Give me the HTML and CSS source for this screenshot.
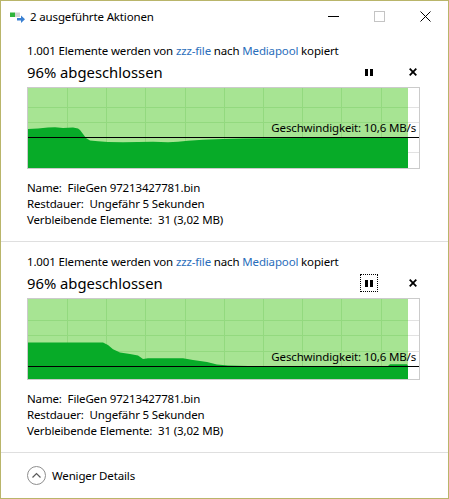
FILE: index.html
```html
<!DOCTYPE html>
<html>
<head lang="de">
    <meta charset="UTF-8">
    <title>2 ausgeführte Aktionen</title>
    <link rel="stylesheet" href="styles.css">
</head>
<body>
<div class="window">
    <div class="titlebar">
        <svg class="app-icon" width="16" height="16" viewBox="0 0 16 16">
            <rect x="1" y="4.5" width="5" height="4.5" fill="#2fb43c"/>
            <rect x="6" y="4.5" width="5" height="4.5" fill="#d3d3d3"/>
            <rect x="8" y="10" width="5" height="2.5" fill="#3a80d2"/>
            <polygon points="12,7.5 16,11.3 12,15" fill="#3a80d2"/>
        </svg>
        <span class="title">2 ausgeführte Aktionen</span>
        <span class="cap-btn">
            <svg width="11" height="11" viewBox="0 0 11 11"><line x1="0" y1="5.5" x2="11" y2="5.5" stroke="#000"/></svg>
        </span>
        <span class="cap-btn">
            <svg width="11" height="11" viewBox="0 0 11 11"><rect x="0.5" y="0.5" width="10" height="10" fill="none" stroke="#c4c4c4"/></svg>
        </span>
        <span class="cap-btn">
            <svg width="11" height="11" viewBox="0 0 11 11"><path d="M0.5 0.5 L10.5 10.5 M10.5 0.5 L0.5 10.5" stroke="#000" fill="none"/></svg>
        </span>
    </div>

    <div class="operation">
        <div class="op-line">1.001 Elemente werden von <a href="#">zzz-file</a> nach <a href="#">Mediapool</a> kopiert</div>
        <div class="op-status">
            <span class="percent">96% abgeschlossen</span>
            <span class="pause-btn">
                <svg width="8" height="7" viewBox="0 0 8 7"><rect x="0" y="0" width="3" height="7"/><rect x="5" y="0" width="3" height="7"/></svg>
            </span>
            <span class="cancel-btn">
                <svg width="8" height="8" viewBox="0 0 8 8"><path d="M0.7 0.7 L7.3 7.3 M7.3 0.7 L0.7 7.3" stroke="#000" stroke-width="1.8"/></svg>
            </span>
        </div>
        <div class="graph">
            <svg width="391" height="80" viewBox="0 0 391 80">
                <rect x="0" y="0" width="380" height="80" fill="#a7e493"/>
                <g stroke="#93d97f" stroke-width="1">
                    <line x1="39.5" y1="0" x2="39.5" y2="80"/>
                    <line x1="78.5" y1="0" x2="78.5" y2="80"/>
                    <line x1="117.5" y1="0" x2="117.5" y2="80"/>
                    <line x1="157.5" y1="0" x2="157.5" y2="80"/>
                    <line x1="196.5" y1="0" x2="196.5" y2="80"/>
                    <line x1="235.5" y1="0" x2="235.5" y2="80"/>
                    <line x1="274.5" y1="0" x2="274.5" y2="80"/>
                    <line x1="313.5" y1="0" x2="313.5" y2="80"/>
                    <line x1="353.5" y1="0" x2="353.5" y2="80"/>
                    <line x1="0" y1="19.5" x2="380" y2="19.5"/>
                    <line x1="0" y1="34.5" x2="380" y2="34.5"/>
                    <line x1="0" y1="64.5" x2="380" y2="64.5"/>
                </g>
                <g stroke="#e2e2e2" stroke-width="1">
                    <line x1="380" y1="19.5" x2="391" y2="19.5"/>
                    <line x1="380" y1="34.5" x2="391" y2="34.5"/>
                    <line x1="380" y1="64.5" x2="391" y2="64.5"/>
                </g>
                <polygon fill="#07ab28" points="0,41 10,40.5 20,39.6 27,39.2 35,40 45,39.5 50,40.5 52,42 55,46 58,50 62,52.5 70,53.2 80,54 95,54.3 110,54 125,53.8 140,54.3 150,53.8 160,52.8 175,51.8 195,51 215,50.6 240,50.2 280,50.1 330,50 380,50 380,80 0,80"/>
                <line x1="0" y1="49.5" x2="391" y2="49.5" stroke="#000" stroke-width="1"/>
            </svg>
            <span class="speed speed-a">Geschwindigkeit: 10,6 MB/s</span>
        </div>
        <div class="details">
            <div><span class="label">Name:</span> FileGen 97213427781.bin</div>
            <div><span class="label">Restdauer:</span> Ungefähr 5 Sekunden</div>
            <div><span class="label">Verbleibende Elemente:</span> 31 (3,02 MB)</div>
        </div>
    </div>

    <div class="operation">
        <div class="op-line">1.001 Elemente werden von <a href="#">zzz-file</a> nach <a href="#">Mediapool</a> kopiert</div>
        <div class="op-status">
            <span class="percent">96% abgeschlossen</span>
            <span class="pause-btn focused">
                <svg width="8" height="7" viewBox="0 0 8 7"><rect x="0" y="0" width="3" height="7"/><rect x="5" y="0" width="3" height="7"/></svg>
            </span>
            <span class="cancel-btn">
                <svg width="8" height="8" viewBox="0 0 8 8"><path d="M0.7 0.7 L7.3 7.3 M7.3 0.7 L0.7 7.3" stroke="#000" stroke-width="1.8"/></svg>
            </span>
        </div>
        <div class="graph">
            <svg width="391" height="80" viewBox="0 0 391 80">
                <rect x="0" y="0" width="380" height="80" fill="#a7e493"/>
                <g stroke="#93d97f" stroke-width="1">
                    <line x1="39.5" y1="0" x2="39.5" y2="80"/>
                    <line x1="78.5" y1="0" x2="78.5" y2="80"/>
                    <line x1="117.5" y1="0" x2="117.5" y2="80"/>
                    <line x1="157.5" y1="0" x2="157.5" y2="80"/>
                    <line x1="196.5" y1="0" x2="196.5" y2="80"/>
                    <line x1="235.5" y1="0" x2="235.5" y2="80"/>
                    <line x1="274.5" y1="0" x2="274.5" y2="80"/>
                    <line x1="313.5" y1="0" x2="313.5" y2="80"/>
                    <line x1="353.5" y1="0" x2="353.5" y2="80"/>
                    <line x1="0" y1="21.5" x2="380" y2="21.5"/>
                    <line x1="0" y1="36.5" x2="380" y2="36.5"/>
                    <line x1="0" y1="52.5" x2="380" y2="52.5"/>
                </g>
                <g stroke="#e2e2e2" stroke-width="1">
                    <line x1="380" y1="21.5" x2="391" y2="21.5"/>
                    <line x1="380" y1="36.5" x2="391" y2="36.5"/>
                    <line x1="380" y1="52.5" x2="391" y2="52.5"/>
                </g>
                <polygon fill="#07ab28" points="0,43.5 75,43.5 80,46 85,50.3 92,53.5 102,55 110,56.5 115,60 120,59.3 155,59.3 165,61 179,63 189,65.5 200,66.5 220,67 360,67 362,65.2 379,65.2 380,67 380,80 0,80"/>
                <line x1="0" y1="67.5" x2="391" y2="67.5" stroke="#000" stroke-width="1"/>
            </svg>
            <span class="speed speed-b">Geschwindigkeit: 10,6 MB/s</span>
        </div>
        <div class="details">
            <div><span class="label">Name:</span> FileGen 97213427781.bin</div>
            <div><span class="label">Restdauer:</span> Ungefähr 5 Sekunden</div>
            <div><span class="label">Verbleibende Elemente:</span> 31 (3,02 MB)</div>
        </div>
    </div>

    <div class="footer">
        <svg class="toggle-icon" width="19" height="19" viewBox="0 0 19 19">
            <circle cx="9.5" cy="9.5" r="9" fill="none" stroke="#8e8e8e"/>
            <polyline points="5.5,11.5 9.5,7.5 13.5,11.5" fill="none" stroke="#5a5a5a" stroke-width="1.2"/>
        </svg>
        <span>Weniger Details</span>
    </div>
</div>
</body>
</html>
```

FILE: styles.css
```css
body {
    margin: 0;
    background: #fff;
    color: #000;
    font-family: "Noto Sans", "Open Sans", sans-serif;
    font-size: 11.5px;
    letter-spacing: -0.15px;
}

.window {
    width: 449px;
    height: 499px;
    box-sizing: border-box;
    border: 1px solid #b9b56a;
    display: flex;
    flex-direction: column;
}

/* title bar */
.titlebar {
    height: 30px;
    display: flex;
    align-items: center;
    flex-shrink: 0;
}

.app-icon {
    margin-left: 8px;
    margin-right: 5px;
}

.title {
    flex: 1;
}

.cap-btn {
    width: 46px;
    height: 30px;
    display: flex;
    align-items: center;
    justify-content: center;
}

.cap-btn svg {
    display: block;
}

/* copy operation */
.operation {
    padding: 12px 28px 13px 26px;
    border-bottom: 1px solid #dfdfdf;
}

.op-line {
    line-height: 16px;
    white-space: nowrap;
}

.op-line a {
    color: #2a6ebb;
    text-decoration: none;
}

.op-status {
    display: flex;
    align-items: center;
    height: 20px;
    margin-top: 3px;
}

.percent {
    flex: 1;
    font-size: 14.8px;
    letter-spacing: 0;
}

.pause-btn {
    width: 18px;
    height: 18px;
    box-sizing: border-box;
    display: flex;
    align-items: center;
    justify-content: center;
}

.pause-btn svg,
.cancel-btn svg {
    display: block;
}

.pause-btn.focused {
    outline: 1px dotted #000;
    outline-offset: -1px;
}

.cancel-btn {
    width: 14px;
    height: 18px;
    margin-left: 28px;
    display: flex;
    align-items: center;
    justify-content: center;
}

.graph {
    position: relative;
    margin-top: 5px;
    border: 1px solid #cbcbcb;
    height: 80px;
}

.graph svg {
    display: block;
}

.speed {
    position: absolute;
    right: 3px;
    line-height: 16px;
    white-space: nowrap;
}

.speed-a {
    top: 32px;
}

.speed-b {
    top: 50px;
}

.details {
    margin-top: 11px;
    line-height: 16px;
}

.details .label {
    margin-right: 3px;
}

/* footer */
.footer {
    flex: 1;
    display: flex;
    align-items: center;
    gap: 6px;
    padding-left: 26px;
}

.toggle-icon {
    display: block;
}
```
